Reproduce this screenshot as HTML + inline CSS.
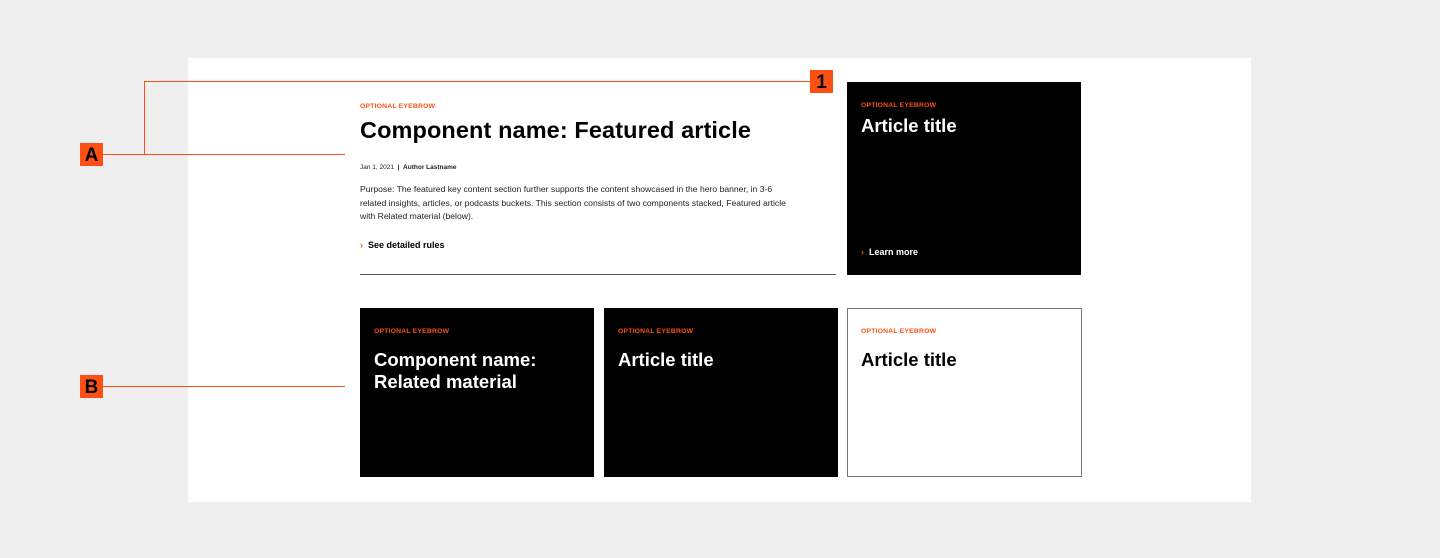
<!DOCTYPE html>
<html><head><style>
*{margin:0;padding:0;box-sizing:border-box}
body{width:1440px;height:558px;background:#efefef;position:relative;font-family:"Liberation Sans",sans-serif;overflow:hidden}
.a{position:absolute}
.panel{left:188px;top:58px;width:1063px;height:444px;background:#fff}
.or{background:#fe5015}
.lbl{width:23px;height:23px;color:#000;font-weight:bold;font-size:19px;text-align:center;line-height:26px}
.eb{font-size:6.8px;font-weight:bold;color:#fe5015;letter-spacing:.2px}
.card{background:#000}
.ct{font-weight:bold;font-size:18.5px;line-height:22px;color:#fff}
</style></head><body>
<div class="a panel"></div>
<div class="a or" style="left:144px;top:81px;width:666px;height:1px"></div>
<div class="a or" style="left:144px;top:81px;width:1px;height:74px"></div>
<div class="a or" style="left:103px;top:154px;width:242px;height:1px"></div>
<div class="a or" style="left:103px;top:386px;width:242px;height:1px"></div>
<div class="a or lbl" style="left:810px;top:70px">1</div>
<div class="a or lbl" style="left:80px;top:143px">A</div>
<div class="a or lbl" style="left:80px;top:375px">B</div>
<div class="a eb" style="left:360px;top:103px">OPTIONAL EYEBROW</div>
<div class="a" style="left:360px;top:117px;font-size:23.5px;font-weight:bold;letter-spacing:0.1px;color:#000">Component name: Featured article</div>
<div class="a" style="left:360px;top:164px;font-size:6.5px;color:#222">Jan 1, 2021 &nbsp;<b>|</b>&nbsp; <b>Author Lastname</b></div>
<div class="a" style="left:360px;top:183px;width:430px;font-size:8.6px;line-height:13.5px;color:#222">Purpose: The featured key content section further supports the content showcased in the hero banner, in 3-6 related insights, articles, or podcasts buckets. This section consists of two components stacked, Featured article with Related material (below).</div>
<div class="a" style="left:360px;top:240px;font-size:9px;font-weight:bold;color:#000"><span style="color:#fe5015">›</span>&nbsp; See detailed rules</div>
<div class="a" style="left:360px;top:274px;width:476px;height:1px;background:#555"></div>
<div class="a card" style="left:847px;top:82px;width:234px;height:193px">
<div class="a eb" style="left:14px;top:20px">OPTIONAL EYEBROW</div>
<div class="a ct" style="left:14px;top:33px">Article title</div>
<div class="a" style="left:14px;top:165px;font-size:9px;font-weight:bold;color:#fff"><span style="color:#fe5015">›</span>&nbsp; Learn more</div>
</div>
<div class="a card" style="left:360px;top:308px;width:234px;height:169px">
<div class="a eb" style="left:14px;top:20px">OPTIONAL EYEBROW</div>
<div class="a ct" style="left:14px;top:41px">Component name:<br>Related material</div>
</div>
<div class="a card" style="left:604px;top:308px;width:234px;height:169px">
<div class="a eb" style="left:14px;top:20px">OPTIONAL EYEBROW</div>
<div class="a ct" style="left:14px;top:41px">Article title</div>
</div>
<div class="a" style="left:847px;top:308px;width:235px;height:169px;border:1px solid #777;background:#fff">
<div class="a eb" style="left:13px;top:19px">OPTIONAL EYEBROW</div>
<div class="a ct" style="left:13px;top:40px;color:#000">Article title</div>
</div>
</body></html>
